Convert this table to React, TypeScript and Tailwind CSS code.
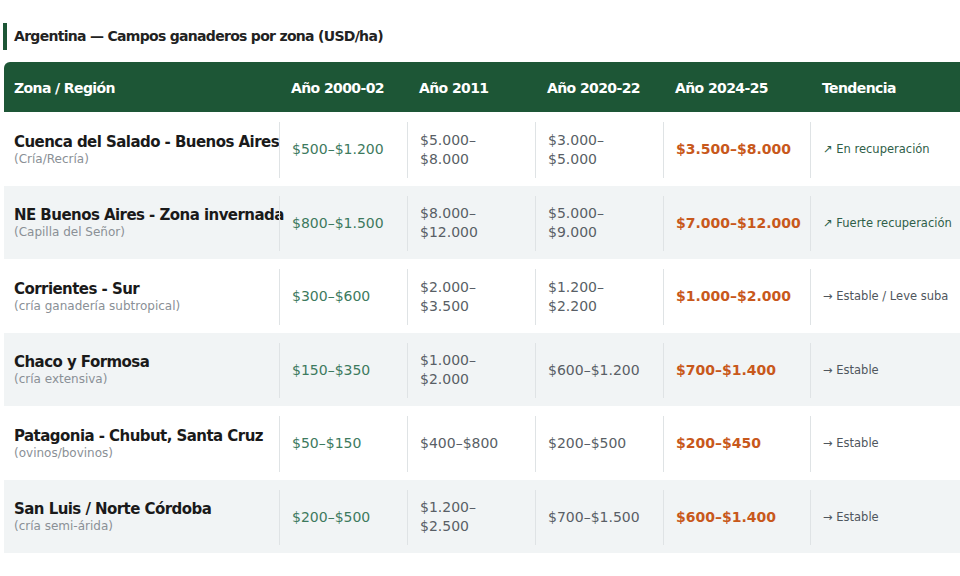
const rows = [
  {
    zona: "Cuenca del Salado - Buenos Aires",
    sub: "(Cría/Recría)",
    a: "$500–$1.200",
    b: "$5.000–$8.000",
    c: "$3.000–$5.000",
    d: "$3.500–$8.000",
    t: "↗ En recuperación",
    up: true,
  },
  {
    zona: "NE Buenos Aires - Zona invernada",
    sub: "(Capilla del Señor)",
    a: "$800–$1.500",
    b: "$8.000–$12.000",
    c: "$5.000–$9.000",
    d: "$7.000–$12.000",
    t: "↗ Fuerte recuperación",
    up: true,
  },
  {
    zona: "Corrientes - Sur",
    sub: "(cría ganadería subtropical)",
    a: "$300–$600",
    b: "$2.000–$3.500",
    c: "$1.200–$2.200",
    d: "$1.000–$2.000",
    t: "→ Estable / Leve suba",
    up: false,
  },
  {
    zona: "Chaco y Formosa",
    sub: "(cría extensiva)",
    a: "$150–$350",
    b: "$1.000–$2.000",
    c: "$600–$1.200",
    d: "$700–$1.400",
    t: "→ Estable",
    up: false,
  },
  {
    zona: "Patagonia - Chubut, Santa Cruz",
    sub: "(ovinos/bovinos)",
    a: "$50–$150",
    b: "$400–$800",
    c: "$200–$500",
    d: "$200–$450",
    t: "→ Estable",
    up: false,
  },
  {
    zona: "San Luis / Norte Córdoba",
    sub: "(cría semi-árida)",
    a: "$200–$500",
    b: "$1.200–$2.500",
    c: "$700–$1.500",
    d: "$600–$1.400",
    t: "→ Estable",
    up: false,
  },
];

const headers = ["Año 2000-02", "Año 2011", "Año 2020-22", "Año 2024-25", "Tendencia"];
const widths = ["w-[128px]", "w-[128px]", "w-[128px]", "w-[147px]", "flex-1"];

export default function App() {
  return (
    <div className="w-[960px] h-[576px] bg-white overflow-hidden pt-[23px] font-['DejaVu_Sans',sans-serif]">
      <div className="ml-[3px] flex items-center h-[27px] border-l-[4px] border-[#1d5636] pl-[7px]">
        <h1 className="text-[14px] tracking-[-0.7px] font-bold text-[#222]">Argentina — Campos ganaderos por zona (USD/ha)</h1>
      </div>

      <div className="ml-[4px] mt-[12px] w-[966px]">
        <div className="flex h-[50px] items-center pt-[2px] bg-[#1d5636] rounded-tl-[6px] text-white text-[14px] tracking-[-0.6px] font-bold">
          <div className="w-[275px] pl-[10px]">Zona / Región</div>
          {headers.map((h, i) => (
            <div key={h} className={`${widths[i]} pl-3`}>
              {h}
            </div>
          ))}
        </div>

        {rows.map((r, i) => (
          <div
            key={r.zona}
            className={`flex h-[73.5px] pt-[10px] pb-[8px] ${i % 2 === 1 ? "bg-[#f1f4f5]" : "bg-white"}`}
          >
            <div className="w-[275px] pl-[10px] flex flex-col justify-center">
              <div className="text-[15px] tracking-[-0.55px] font-bold text-[#1a1a1a] leading-[18px] whitespace-nowrap">{r.zona}</div>
              <div className="text-[12px] text-[#8a9096] leading-[16px]">{r.sub}</div>
            </div>
            <div className="w-[128px] pl-3 pr-3 border-l border-[#dfe3e5] flex items-center text-[14px] leading-[19px] text-[#3d7a5e]">
              {r.a}
            </div>
            <div className="w-[128px] pl-3 pr-5 border-l border-[#dfe3e5] flex items-center text-[14px] leading-[19px] text-[#595f66]">
              {r.b}
            </div>
            <div className="w-[128px] pl-3 pr-5 border-l border-[#dfe3e5] flex items-center text-[14px] leading-[19px] text-[#595f66]">
              {r.c}
            </div>
            <div className="w-[147px] pl-3 border-l border-[#dfe3e5] flex items-center text-[14px] font-bold text-[#c8581b] whitespace-nowrap">
              {r.d}
            </div>
            <div
              className={`flex-1 pl-3 border-l border-[#dfe3e5] flex items-center text-[11.5px] whitespace-nowrap ${
                r.up ? "text-[#2f5e48]" : "text-[#4f565d]"
              }`}
            >
              {r.t}
            </div>
          </div>
        ))}
      </div>
    </div>
  );
}
